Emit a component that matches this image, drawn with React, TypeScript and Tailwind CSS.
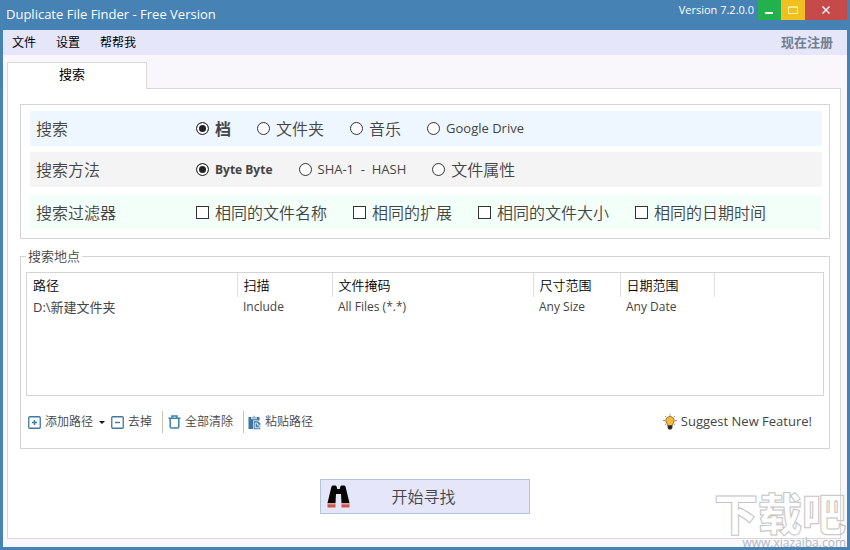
import { useState } from "react";

const menus = ["文件", "设置", "帮帮我"];

const searchTypes = ["档", "文件夹", "音乐", "Google Drive"];
const searchMethods = ["Byte Byte", "SHA-1  -  HASH", "文件属性"];
const searchFilters = ["相同的文件名称", "相同的扩展", "相同的文件大小", "相同的日期时间"];

const locations = [
  {
    path: "D:\\新建文件夹",
    scan: "Include",
    mask: "All Files (*.*)",
    size: "Any Size",
    date: "Any Date",
  },
];

// latin labels are drawn smaller than the chinese ones
const labelStyle = (text: string, selected: boolean) => {
  if (/^[\x00-\x7f]+$/.test(text)) {
    return selected ? "text-xs font-bold" : "text-[13px]";
  }
  return selected ? "text-base font-bold" : "text-base font-[350]";
};

function RadioRow({
  title,
  name,
  options,
  className,
}: {
  title: string;
  name: string;
  options: string[];
  className: string;
}) {
  const [value, setValue] = useState(options[0]);
  return (
    <div role="radiogroup" aria-label={title} className={`flex min-h-[35px] items-center px-1.5 ${className}`}>
      <p className="w-40 text-base leading-6 font-[350]">{title}</p>
      <div className="flex gap-[26px]">
        {options.map((option) => (
          <label key={option} className="flex items-center gap-1.5">
            <input
              type="radio"
              name={name}
              checked={value === option}
              onChange={() => setValue(option)}
              className="h-[13px] w-[13px] appearance-none rounded-full border border-[#333] bg-white checked:bg-[#222] checked:shadow-[inset_0_0_0_2px_#fff]"
            />
            <span className={`whitespace-pre ${labelStyle(option, value === option)}`}>{option}</span>
          </label>
        ))}
      </div>
    </div>
  );
}

function TitleBar() {
  return (
    <header className="flex h-[30px] items-start justify-between pl-[3px] text-white">
      <h1 className="text-[13px] leading-7">Duplicate File Finder - Free Version</h1>
      <div className="flex h-5 items-center">
        <span className="pr-1 text-[11px]">Version 7.2.0.0</span>
        <button aria-label="Minimize" className="flex h-5 w-[23px] items-center justify-center bg-[#22b14c]">
          <svg width="9" height="10" viewBox="0 0 9 10">
            <path d="M0 8h8" stroke="#fff" strokeWidth="2" />
          </svg>
        </button>
        <button aria-label="Maximize" className="flex h-5 w-6 items-center justify-center bg-[#f0c020]">
          <svg width="10" height="8" viewBox="0 0 10 8">
            <path d="M.5 1h9v6.5h-9zM0 1h10" fill="none" stroke="#fdf3a8" />
          </svg>
        </button>
        <button aria-label="Close" className="flex h-5 w-[42px] items-center justify-center bg-[#c74a4a]">
          <svg width="8" height="8" viewBox="0 0 8 8">
            <path d="M.5.5l7 7M7.5.5l-7 7" stroke="#fff" strokeWidth="1.4" />
          </svg>
        </button>
      </div>
    </header>
  );
}

function PlusMinusIcon({ plus }: { plus?: boolean }) {
  return (
    <svg width="13" height="13" viewBox="0 0 13 13" fill="none" stroke="#40789f">
      <rect x=".75" y=".75" width="11.5" height="11.5" rx="1" strokeWidth="1.3" />
      <path d={plus ? "M4 6.500h5M6.500 4v5" : "M4 6.5h5"} strokeWidth="1.4" />
    </svg>
  );
}

function TrashIcon() {
  return (
    <svg width="13" height="14" viewBox="0 0 13 14" fill="none" stroke="#3f81a8" strokeWidth="1.5">
      <path d="M.5 3.2h12M4 3V1h5v2M2.2 3.5v8.2q0 1.3 1.3 1.3h6q1.3 0 1.3-1.3V3.5" />
    </svg>
  );
}

function PasteIcon() {
  return (
    <svg width="13" height="15" viewBox="0 0 13 15">
      <path d="M.5 2h11v3.500h-6v8.500h-5z" fill="#3d74a0" />
      <path d="M3.500 4V1.800h1.300a1.200 1.200 0 0 1 2.400 0h1.300V4z" fill="#8db5d2" stroke="#fff" strokeWidth=".5" />
      <path d="M5.500 5.800h4.500l2.500 2.500V14.500h-7z" fill="#4a80ab" stroke="#fff" strokeWidth=".5" />
      <path d="M7.200 8h2.300v2h1.800v2.800H7.200z" fill="none" stroke="#fff" strokeWidth=".8" />
    </svg>
  );
}

function BulbIcon() {
  return (
    <svg width="14" height="16" viewBox="0 0 14 16">
      <path
        d="M7 0v1.800M2 2l1.300 1.300M12 2l-1.300 1.300M0 6.500h2M12 6.500h2M2 11l1.200-1M12 11l-1.200-1"
        stroke="#a08a60"
        strokeWidth=".9"
      />
      <path
        d="M7 2.500a4.200 4.200 0 0 1 4.200 4.200c0 2-1.700 2.700-1.900 4.800H4.700c-.2-2.100-1.900-2.800-1.900-4.800A4.200 4.200 0 0 1 7 2.500z"
        fill="#f6b93c"
        stroke="#7d5a20"
        strokeWidth=".8"
      />
      <path d="M4.600 11.500h4.800v2.200L8.200 15.500H5.800l-1.200-1.800z" fill="#262626" />
    </svg>
  );
}

function BinocularsIcon() {
  return (
    <svg width="23" height="23" viewBox="0 0 23 23">
      <path
        d="M4.500 1.500Q5 .5 6 .5h2.500q1 0 1.300 1.500L10.200 4h2.600l.4-2Q13.500.5 14.500.5H17q1 0 1.500 1L22.500 18h-8L14 9h-5L8.500 18h-8z"
        fill="#060606"
      />
      <path d="M.5 18.500h8V22.500h-8zM14.500 18.500h8V22.500h-8z" fill="#c9564c" />
      <path d="M.5 19h8M14.500 19h8" stroke="#eda79c" />
    </svg>
  );
}

function LocationTable() {
  return (
    <div className="min-h-[124px] flex-1 border border-[#d4d4d4]">
      <table className="w-full table-fixed text-left">
        <colgroup>
          <col className="w-[210px]" />
          <col className="w-[95px]" />
          <col className="w-[201px]" />
          <col className="w-[87px]" />
          <col className="w-[94px]" />
          <col />
        </colgroup>
        <thead className="text-[13px] leading-6 text-black">
          <tr>
            {["路径", "扫描", "文件掩码", "尺寸范围", "日期范围"].map((title) => (
              <th key={title} className="border-r border-[#dedede] px-1.5 py-0 font-[350]">
                {title}
              </th>
            ))}
            <td />
          </tr>
        </thead>
        <tbody className="text-xs leading-5">
          {locations.map((item) => (
            <tr key={item.path}>
              <td className="px-1.5 text-[13px] leading-5">{item.path}</td>
              <td className="px-1.5">{item.scan}</td>
              <td className="px-1.5">{item.mask}</td>
              <td className="px-1.5">{item.size}</td>
              <td className="px-1.5">{item.date}</td>
              <td />
            </tr>
          ))}
        </tbody>
      </table>
    </div>
  );
}

function Toolbar() {
  return (
    <div className="flex items-center justify-between pr-3 text-xs">
      <div className="flex items-center font-[350]">
        <button className="flex items-center gap-1 pl-0.5">
          <PlusMinusIcon plus />
          添加路径
          <svg width="6" height="3" viewBox="0 0 6 3" className="mx-0.5">
            <path d="M0 0h6L3 3z" fill="#111" />
          </svg>
        </button>
        <button className="flex items-center gap-1 px-1">
          <PlusMinusIcon />
          去掉
        </button>
        <span className="mr-1 ml-1.5 h-[22px] w-px bg-[#c8c0b4]" />
        <button className="flex items-center gap-1 pr-1 pl-px">
          <TrashIcon />
          全部清除
        </button>
        <span className="mr-1 ml-1.5 h-[22px] w-px bg-[#c8c0b4]" />
        <button className="flex items-center gap-1">
          <PasteIcon />
          粘贴路径
        </button>
      </div>
      <button className="flex items-center gap-1 text-[13px]">
        <BulbIcon />
        Suggest New Feature!
      </button>
    </div>
  );
}

export default function App() {
  return (
    <div className="relative flex min-h-screen flex-col overflow-hidden bg-[#4682b4] px-[3px] pb-[3px] font-['Open_Sans','Noto_Sans_CJK_SC',sans-serif] text-[#444]">
      <TitleBar />
      <nav className="flex h-[25px] items-center justify-between bg-[#e6e6fa] pr-3.5 pl-[9px] text-xs text-black">
        <div className="flex gap-5">
          {menus.map((menu) => (
            <button key={menu}>{menu}</button>
          ))}
        </div>
        <a href="#register" className="text-[13px] font-bold text-[#708090]">
          现在注册
        </a>
      </nav>
      <main className="flex flex-1 flex-col bg-[#f9f7fb] px-1 pt-[7px] pb-2">
        <div role="tablist" className="flex">
          <button
            role="tab"
            aria-selected="true"
            className="z-10 -mb-px h-[27px] w-[140px] border border-b-0 border-[#dcdad6] bg-white pr-2.5 pb-0.5 text-[13px] text-black"
          >
            搜索
          </button>
        </div>
        <div className="mr-[2px] flex flex-1 flex-col border border-[#d8d8d8] bg-white pt-[15px] pr-2.5 pb-6 pl-3">
          <section className="flex flex-col border border-[#d4d4d4] pt-1.5 pr-[7px] pb-2 pl-[9px]">
            <RadioRow title="搜索" name="type" options={searchTypes} className="mb-1.5 bg-[#eef6ff]" />
            <RadioRow title="搜索方法" name="method" options={searchMethods} className="mb-2 bg-[#f4f4f4]" />
            <div className="flex min-h-[35px] items-center bg-[#f3fff9] px-1.5">
              <p className="w-40 text-base leading-6 font-[350]">搜索过滤器</p>
              <div className="flex gap-[26px]">
                {searchFilters.map((filter) => (
                  <label key={filter} className="flex items-center gap-1.5 text-base leading-6 font-[350]">
                    <input
                      type="checkbox"
                      className="h-[13px] w-[13px] appearance-none border border-[#333] bg-white checked:bg-[#222] checked:shadow-[inset_0_0_0_2px_#fff]"
                    />
                    {filter}
                  </label>
                ))}
              </div>
            </div>
          </section>

          <fieldset className="mt-2 flex flex-1 flex-col border border-[#d4d4d4] px-[5px] pb-[15px]">
            <legend className="px-0.5 text-[13px] leading-[18px] font-[350]">搜索地点</legend>
            <div className="flex h-full flex-col gap-[15px] pt-[7px]">
              <LocationTable />
              <Toolbar />
            </div>
          </fieldset>

          <button className="mx-auto mt-[30px] flex h-[35px] w-[210px] items-center border border-[#b0c4de] bg-[#e6e6fa] pl-1.5 text-base font-[350]">
            <BinocularsIcon />
            <span className="flex-1 pr-8">开始寻找</span>
          </button>
        </div>
      </main>
      <div className="pointer-events-none absolute right-1 bottom-0 flex flex-col items-end select-none">
        <p className="text-[44px] leading-[44px] font-black text-transparent [-webkit-text-stroke:1px_#c4c4c4]">
          下载吧
        </p>
        <p className="text-xs leading-[14px] text-[#b4b8be]">www.xiazaiba.com</p>
      </div>
    </div>
  );
}
